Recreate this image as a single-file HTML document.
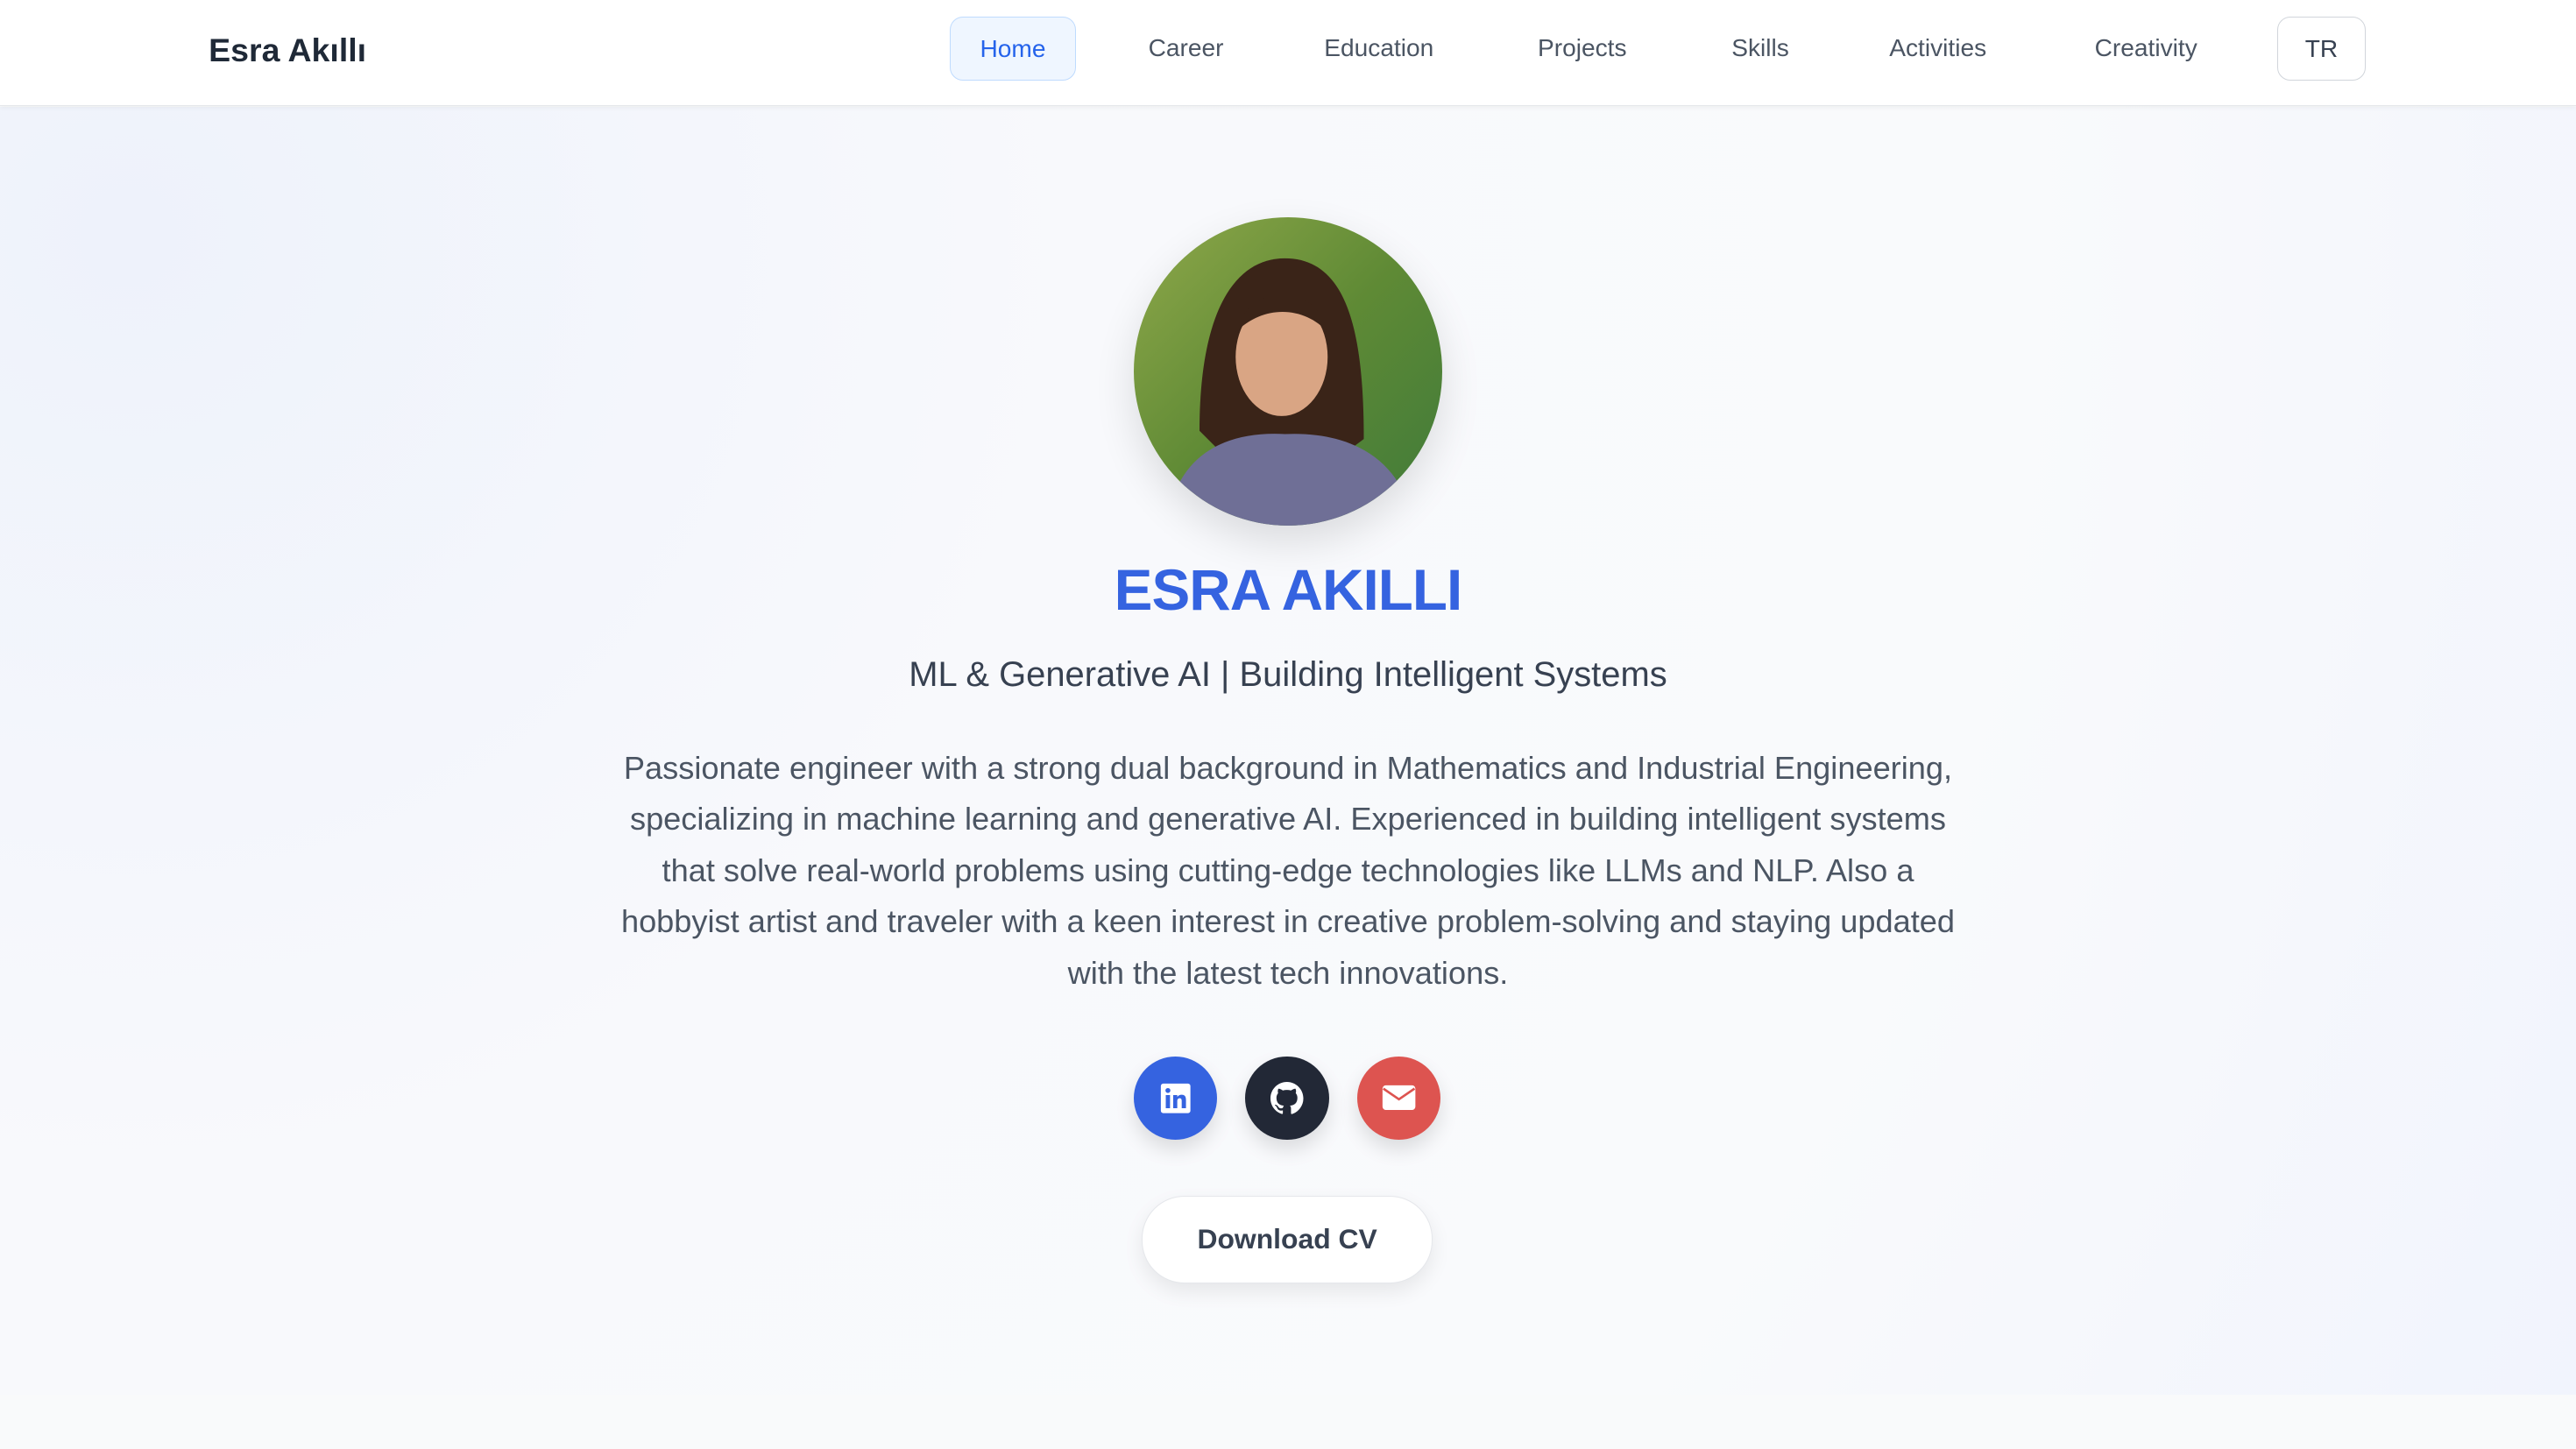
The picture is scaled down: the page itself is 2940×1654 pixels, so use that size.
<!DOCTYPE html>
<html><head><meta charset="utf-8"><style>
html,body{margin:0;padding:0}
body{width:1568px;height:882px;overflow:hidden;zoom:1.875;font-family:"Liberation Sans",sans-serif;background:#f9fafb;position:relative}
.nav{position:absolute;left:0;top:0;width:1568px;height:64px;background:#fff;border-bottom:1px solid #e5e7eb;box-shadow:0 1px 3px rgba(0,0,0,.05);z-index:2}
.logo{position:absolute;left:127px;top:19px;font-size:20px;font-weight:bold;color:#1f2937}
.nl{position:absolute;top:21px;font-size:15px;color:#4b5563}
.home{position:absolute;left:578px;top:10px;width:76px;height:38px;border:1px solid #bfdbfe;background:#eff6ff;border-radius:8px;color:#2563eb;font-size:15px;text-align:center;line-height:38px}
.tr{position:absolute;left:1386px;top:10px;width:53px;height:38px;border:1px solid #d1d5db;border-radius:8px;font-size:15px;text-align:center;line-height:38px;color:#374151}
.hero{position:absolute;left:0;top:65px;width:1568px;height:784px;background:radial-gradient(circle at 5% 10%,#eef2fb 0,#f8f9fc 35%,#f9fafc 70%,#f1f4fd 100%)}
.c{position:absolute;left:0;width:1568px;text-align:center}
.av{position:absolute;left:690px;top:132px;width:188px;height:188px;border-radius:50%;overflow:hidden;box-shadow:0 10px 25px rgba(0,0,0,.12)}
.ic{position:absolute;top:643px;width:51px;height:51px;border-radius:50%;box-shadow:0 6px 12px rgba(0,0,0,.12);display:flex;align-items:center;justify-content:center}
.btn{position:absolute;left:695px;top:728px;width:176px;height:52px;border-radius:26px;background:#fff;border:1px solid #e5e7eb;box-shadow:0 5px 12px rgba(0,0,0,.08);font-size:17px;font-weight:bold;color:#374151;text-align:center;line-height:52px}
</style></head><body>
<div class="nav">
<div class="logo">Esra Akıllı</div>
<div class="home">Home</div>
<div class="nl" style="left:699px">Career</div>
<div class="nl" style="left:806px">Education</div>
<div class="nl" style="left:936px">Projects</div>
<div class="nl" style="left:1054px">Skills</div>
<div class="nl" style="left:1150px">Activities</div>
<div class="nl" style="left:1275px">Creativity</div>
<div class="tr">TR</div>
</div>
<div class="hero"></div>
<div class="av"><svg width="188" height="188" viewBox="0 0 188 188">
<defs><linearGradient id="g" x1="0" y1="0" x2="1" y2="1"><stop offset="0" stop-color="#8fa84a"/><stop offset=".5" stop-color="#5f8a35"/><stop offset="1" stop-color="#3f7a3a"/></linearGradient></defs>
<rect width="188" height="188" fill="url(#g)"/>
<path d="M40 130 C40 60 60 25 92 25 C130 25 140 70 140 135 L120 150 L60 150Z" fill="#3a2418"/>
<ellipse cx="90" cy="85" rx="28" ry="36" fill="#d9a584"/>
<path d="M62 70 C70 40 110 38 118 70 C105 55 80 52 62 70Z" fill="#3a2418"/>
<path d="M20 188 C25 145 55 130 92 132 C135 130 165 150 170 188Z" fill="#6f6f96"/>
</svg></div>
<div class="c" style="top:339px;font-size:35px;font-weight:bold;color:#3563e0;letter-spacing:-.5px">ESRA AKILLI</div>
<div class="c" style="top:399px;font-size:21.3px;color:#374151">ML &amp; Generative AI | Building Intelligent Systems</div>
<div class="c" style="top:452px;left:368px;width:832px;font-size:19.3px;line-height:31.2px;color:#4b5563">Passionate engineer with a strong dual background in Mathematics and Industrial Engineering, specializing in machine learning and generative AI. Experienced in building intelligent systems that solve real-world problems using cutting-edge technologies like LLMs and NLP. Also a hobbyist artist and traveler with a keen interest in creative problem-solving and staying updated with the latest tech innovations.</div>
<div class="ic" style="left:690px;background:#3563e0"><svg width="20" height="20" viewBox="0 0 20 20"><rect x="1" y="1" width="18" height="18" rx="1.5" fill="#fff"/><rect x="4" y="8" width="2.6" height="8" fill="#3563e0"/><circle cx="5.3" cy="5.2" r="1.5" fill="#3563e0"/><path d="M8.5 8h2.5v1.2c.6-1 1.6-1.4 2.7-1.4 2 0 2.6 1.3 2.6 3.2V16h-2.6v-4.5c0-1-.3-1.600-1.2-1.6-1 0-1.5.7-1.5 1.7V16H8.5z" fill="#3563e0"/></svg></div>
<div class="ic" style="left:758px;background:#222836"><svg width="20" height="20" viewBox="0 0 16 16"><path fill="#fff" d="M8 0C3.58 0 0 3.58 0 8c0 3.54 2.29 6.53 5.47 7.59.4.07.55-.17.55-.38v-1.33c-2.230.48-2.7-1.07-2.7-1.07-.36-.93-.89-1.17-.89-1.17-.73-.5.06-.49.06-.49.8.06 1.23.83 1.23.83.72 1.22 1.87.87 2.33.66.07-.52.28-.87.5-1.07-1.78-.2-3.64-.89-3.64-3.95 0-.87.31-1.59.82-2.15-.08-.2-.36-1.02.08-2.12 0 0 .67-.21 2.2.82a7.6 7.6 0 0 1 4 0c1.53-1.04 2.2-.82 2.2-.82.44 1.1.16 1.92.08 2.12.51.56.82 1.270.82 2.15 0 3.07-1.87 3.75-3.65 3.95.29.25.54.73.54 1.48v2.2c0 .21.15.46.55.38A8 8 0 0 0 16 8c0-4.42-3.58-8-8-8z"/></svg></div>
<div class="ic" style="left:826px;background:#dd5450"><svg width="22" height="18" viewBox="0 0 22 18"><rect x="1" y="1" width="20" height="15" rx="2" fill="#fff"/><path d="M1.5 3 L11 9.5 L20.5 3" stroke="#dd5450" stroke-width="1.4" fill="none"/></svg></div>
<div class="btn">Download CV</div>
</body></html>
